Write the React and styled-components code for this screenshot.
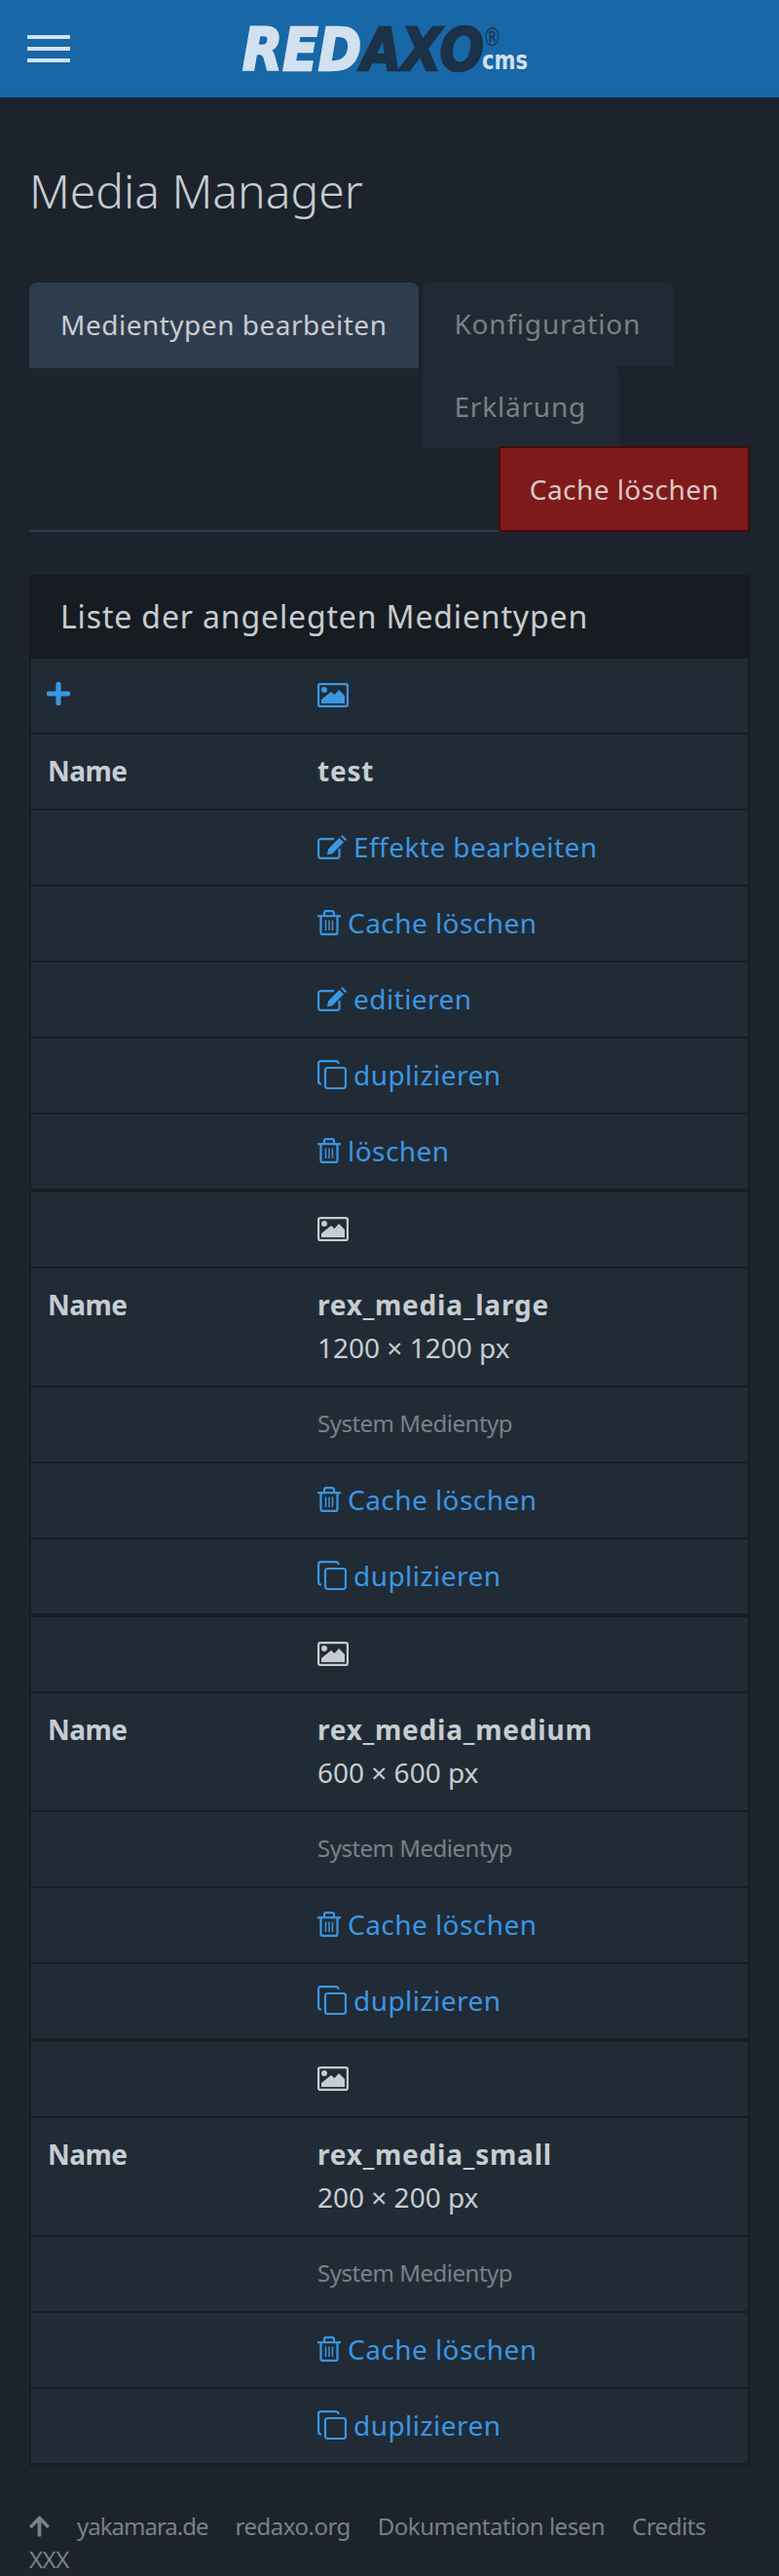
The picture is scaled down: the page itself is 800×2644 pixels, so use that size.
import React from 'react'
import styled, { createGlobalStyle } from 'styled-components'
import { FaPlus, FaArrowUp } from 'react-icons/fa'

const GlobalStyle = createGlobalStyle`
    html, body {
        margin: 0;
        padding: 0;
        background: #1c232d;
    }
    body {
        font-family: "Noto Sans", "Open Sans", sans-serif;
        font-size: 28px;
        line-height: 44px;
        color: #c8ccd0;
    }
`

const CopyIcon = () => (
    <svg width="30" height="30" viewBox="0 0 30 30" fill="none" stroke="currentColor" strokeWidth="2.2">
        <rect x="8" y="8" width="21" height="21" rx="2.5" />
        <path d="M4 24.5h-.5A2.5 2.5 0 0 1 1.1 22V3.6A2.5 2.5 0 0 1 3.6 1.1H19a2.5 2.5 0 0 1 2.5 2.5V4" />
    </svg>
)

const EditIcon = () => (
    <svg width="30" height="25" viewBox="0 0 30 25" fill="none" stroke="currentColor" strokeWidth="2.2">
        <path d="M22.5 14v7.4a2.5 2.5 0 0 1-2.5 2.5H3.6a2.5 2.5 0 0 1-2.5-2.5V6.6a2.5 2.5 0 0 1 2.5-2.5H17" />
        <path d="M11 14.5 22.5 3l4.5 4.5L15.500 19 10 20.500z" fill="currentColor" stroke="none" />
        <path d="M24 1.500 25.500 0 30 4.500 28.500 6z" fill="currentColor" stroke="none" />
    </svg>
)

const TrashIcon = () => (
    <svg width="24" height="26" viewBox="0 0 24 26" fill="none" stroke="currentColor" strokeWidth="2.2">
        <path d="M0 6.200h24" />
        <path d="M7 6V3.200a2 2 0 0 1 2-2h6a2 2 0 0 1 2 2V6" />
        <path d="M3.500 6.200v16.700a2 2 0 0 0 2 2h13a2 2 0 0 0 2-2V6.200" />
        <path d="M8.500 10.500v10.500M12 10.500v10.500M15.500 10.500v10.500" strokeWidth="1.500" />
    </svg>
)

const ImageIcon = () => (
    <svg width="32" height="25" viewBox="0 0 32 25" fill="none" stroke="currentColor" strokeWidth="2.200">
        <rect x="1.100" y="1.100" width="29.800" height="22.800" rx="2" />
        <circle cx="7" cy="7" r="3" fill="currentColor" stroke="none" />
        <path d="M4 21v-4l10-8 3.500 3L22 7l6 6v8z" fill="currentColor" stroke="none" />
    </svg>
)

const Logo = () => (
    <LogoSvg viewBox="0 0 294 46" width="294" height="46">
        <text x="0" y="45" fontFamily="DejaVu Sans" fontWeight="700" fontStyle="italic" fontSize="61" textLength="122" lengthAdjust="spacingAndGlyphs" fill="#d2e1ef" stroke="#d2e1ef" strokeWidth="2.500">RED</text>
        <text x="122" y="45" fontFamily="DejaVu Sans" fontWeight="700" fontStyle="italic" fontSize="61" textLength="126" lengthAdjust="spacingAndGlyphs" fill="#1b3148" stroke="#1b3148" strokeWidth="2.500">AXO</text>
        <text x="247" y="20" fontFamily="DejaVu Sans" fontWeight="400" fontSize="26" textLength="19" lengthAdjust="spacingAndGlyphs" fill="#1b3148">®</text>
        <text x="246" y="44" fontFamily="DejaVu Sans" fontWeight="700" fontSize="27" textLength="47" lengthAdjust="spacingAndGlyphs" fill="#d2e1ef">cms</text>
    </LogoSvg>
)

const sections = [
    {
        active: true,
        name: 'test',
        actions: [
            { icon: 'edit', label: 'Effekte bearbeiten' },
            { icon: 'trash', label: 'Cache löschen' },
            { icon: 'edit', label: 'editieren' },
            { icon: 'copy', label: 'duplizieren' },
            { icon: 'trash', label: 'löschen' },
        ],
    },
    { name: 'rex_media_large', size: '1200 × 1200 px', system: true, actions: [{ icon: 'trash', label: 'Cache löschen' }, { icon: 'copy', label: 'duplizieren' }] },
    { name: 'rex_media_medium', size: '600 × 600 px', system: true, actions: [{ icon: 'trash', label: 'Cache löschen' }, { icon: 'copy', label: 'duplizieren' }] },
    { name: 'rex_media_small', size: '200 × 200 px', system: true, actions: [{ icon: 'trash', label: 'Cache löschen' }, { icon: 'copy', label: 'duplizieren' }] },
]

const icons = {
    edit: <EditIcon />,
    trash: <TrashIcon />,
    copy: <CopyIcon />,
}

function App() {
    return (
        <>
            <GlobalStyle />
            <Header>
                <Burger><span /><span /><span /></Burger>
                <Logo />
            </Header>
            <Main>
                <Title>Media Manager</Title>
                <Tabs>
                    <Tab $active>Medientypen bearbeiten</Tab>
                    <Tab>Konfiguration</Tab>
                    <Tab>Erklärung</Tab>
                </Tabs>
                <ActionRow>
                    <DangerButton>Cache löschen</DangerButton>
                </ActionRow>
                <Panel>
                    <PanelHeading>Liste der angelegten Medientypen</PanelHeading>
                    <Table>
                        <colgroup>
                            <col width="276" />
                            <col />
                        </colgroup>
                        {sections.map(section => (
                            <tbody key={section.name}>
                                <tr>
                                    <td>{section.active && <PlusLink><FaPlus /></PlusLink>}</td>
                                    <td><ImageLink $active={section.active}><ImageIcon /></ImageLink></td>
                                </tr>
                                <tr>
                                    <th>Name</th>
                                    <td>
                                        <TypeName>{section.name}</TypeName>
                                        {section.size && <div>{section.size}</div>}
                                    </td>
                                </tr>
                                {section.system && (
                                    <tr>
                                        <td />
                                        <td><Muted>System Medientyp</Muted></td>
                                    </tr>
                                )}
                                {section.actions.map(action => (
                                    <tr key={action.label}>
                                        <td />
                                        <td><ActionLink>{icons[action.icon]}{action.label}</ActionLink></td>
                                    </tr>
                                ))}
                            </tbody>
                        ))}
                    </Table>
                </Panel>
            </Main>
            <Footer>
                <FooterItem><ArrowIcon /></FooterItem>
                <FooterItem>yakamara.de</FooterItem>
                <FooterItem>redaxo.org</FooterItem>
                <FooterItem>Dokumentation lesen</FooterItem>
                <FooterItem>Credits</FooterItem>
                <FooterItem>XXX</FooterItem>
            </Footer>
        </>
    )
}

export default App

const Header = styled.header`
    height: 100px;
    background: #1867a6;
    display: flex;
    align-items: center;
    padding-left: 28px;
`

const Burger = styled.div`
    width: 44px;
    display: flex;
    flex-direction: column;
    gap: 8px;
    span {
        height: 4px;
        background: #d2e1ef;
    }
`

const LogoSvg = styled.svg`
    margin-left: 177px;
    overflow: visible;
`

const Main = styled.main`
    padding: 0 30px;
`

const Title = styled.h1`
    margin: 0;
    padding: 64px 0 62px;
    font-size: 48px;
    line-height: 64px;
    font-weight: 300;
    color: #c8ccd0;
`

const Tabs = styled.div`
    display: flow-root;
`

const Tab = styled.div`
    float: left;
    height: ${p => (p.$active ? 88 : 86)}px;
    margin-right: 4px;
    padding: 0 ${p => (p.$active ? 33 : 34)}px 2px 32px;
    box-sizing: border-box;
    display: flex;
    align-items: center;
    border-radius: 8px 8px 0 0;
    letter-spacing: ${p => (p.$active ? 0.5 : 0.8)}px;
    background: ${p => (p.$active ? '#2f3c4e' : '#212a34')};
    color: ${p => (p.$active ? '#c8ccd0' : '#7a8087')};
    &:last-child {
        height: 84px;
    }
`

const ActionRow = styled.div`
    display: flex;
    justify-content: flex-end;
    margin-top: -2px;
    box-shadow: inset 0 -2px 0 #2f3c4e;
`

const DangerButton = styled.button`
    width: 258px;
    height: 88px;
    padding: 0;
    font: inherit;
    letter-spacing: 0.45px;
    color: #dcc8c8;
    background: #7f1a1a;
    border: 2px solid #430c0c;
    position: relative;
`

const Panel = styled.section`
    margin-top: 44px;
`

const PanelHeading = styled.div`
    height: 86px;
    display: flex;
    align-items: center;
    padding: 0 32px;
    font-size: 32px;
    letter-spacing: 0.85px;
    background: #161c22;
`

const Table = styled.table`
    width: 100%;
    table-layout: fixed;
    border-collapse: separate;
    border-spacing: 0;
    border-left: 2px solid #171d24;
    border-right: 2px solid #171d24;
    tr > * {
        height: 44px;
        padding: 15px 18px 17px;
        text-align: left;
        vertical-align: top;
        background: #212b36;
        border-bottom: 2px solid #171d24;
    }
    th {
        padding-left: 17px;
        font-weight: 700;
        letter-spacing: -0.5px;
    }
    tbody tr:last-child > * {
        border-bottom-width: 4px;
    }
`

const PlusLink = styled.span`
    display: flex;
    height: 42px;
    align-items: center;
    margin-left: -2px;
    color: #3a97e3;
    svg {
        width: 24px;
        height: 28px;
    }
`

const ImageLink = styled.span`
    display: flex;
    height: 44px;
    align-items: center;
    color: ${p => (p.$active ? '#3a97e3' : '#c8ccd0')};
`

const TypeName = styled.div`
    font-weight: 700;
    letter-spacing: 0.8px;
`

const Muted = styled.div`
    font-size: 24px;
    letter-spacing: -0.5px;
    color: #7a8087;
`

const ActionLink = styled.div`
    display: flex;
    height: 44px;
    align-items: center;
    gap: 7px;
    letter-spacing: 0.45px;
    color: #3a97e3;
`

const Footer = styled.footer`
    display: flex;
    flex-wrap: wrap;
    column-gap: 28px;
    padding: 44px 30px 0;
    font-size: 24px;
    line-height: 34px;
    letter-spacing: -0.5px;
    color: #7a8087;
`

const FooterItem = styled.span`
    display: inline-flex;
    align-items: center;
    &:nth-child(2) {
        letter-spacing: -1px;
    }
`

const ArrowIcon = styled(FaArrowUp)`
    width: 21px;
    height: 24px;
`
